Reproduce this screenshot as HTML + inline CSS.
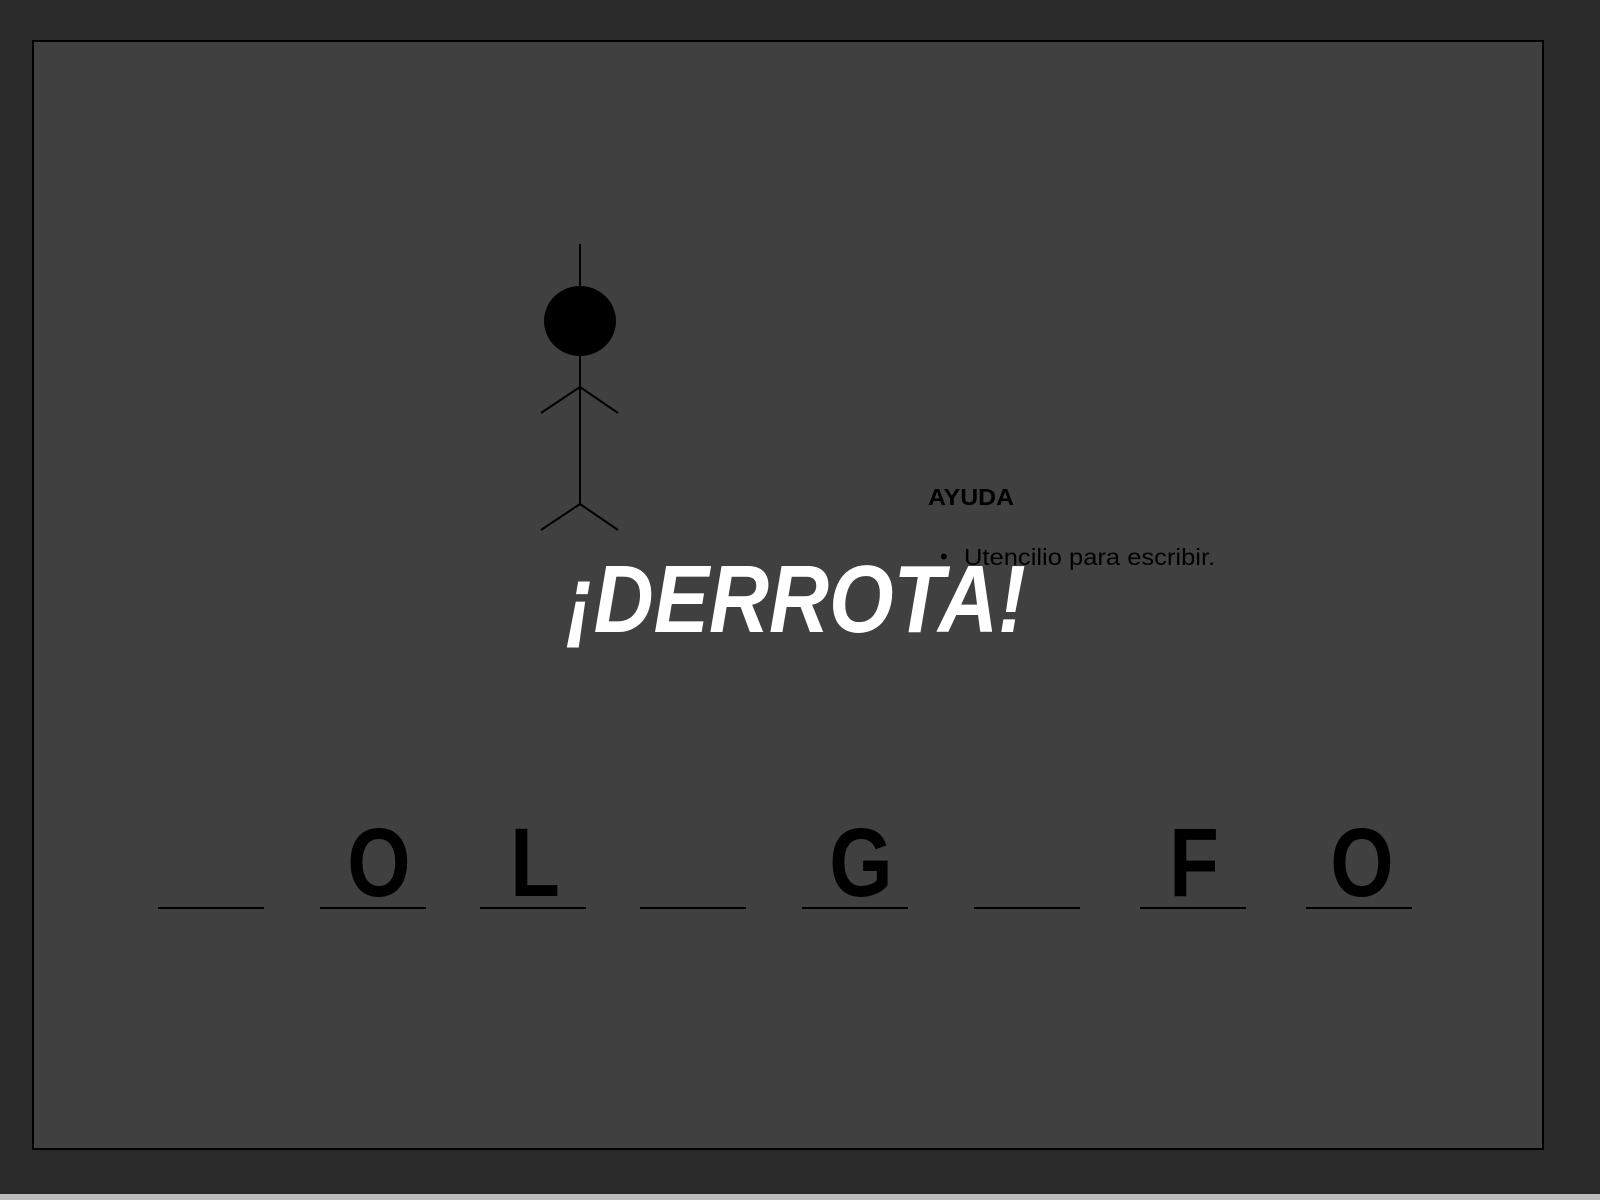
<!DOCTYPE html>
<html><head><meta charset="utf-8"><style>
html,body{margin:0;padding:0;width:1600px;height:1200px;overflow:hidden;background:#2a2a2a;font-family:"Liberation Sans",sans-serif}
.panel{position:absolute;left:32px;top:40px;width:1512px;height:1110px;background:#404040;border:2px solid #000;box-sizing:border-box}
.strip{position:absolute;left:0;top:1194px;width:1600px;height:6px;background:#bdbdbd}
.seg{position:absolute;top:907px;height:2px;width:106px;background:#000}
.let{position:absolute;top:808px;width:106px;text-align:center;font-weight:bold;font-size:97px;line-height:110px;color:#000;transform:scaleX(0.84)}
.t{position:absolute;color:#000}
</style></head><body>
<div class="panel"></div>
<svg style="position:absolute;left:0;top:0" width="1600" height="1200">
<g stroke="#000" stroke-width="2" fill="none">
<line x1="580" y1="244" x2="580" y2="505"/>
<line x1="580" y1="387" x2="541" y2="413"/>
<line x1="580" y1="387" x2="618" y2="413"/>
<line x1="580" y1="504" x2="541" y2="530"/>
<line x1="580" y1="504" x2="618" y2="530"/>
</g>
<ellipse cx="580" cy="321" rx="36" ry="35" fill="#000"/>
</svg>
<div class="t" style="left:928px;top:484px;font-weight:bold;font-size:23px;transform:scaleX(1.08);transform-origin:left">AYUDA</div>
<div class="t" style="left:940px;top:544px;font-size:22px">•</div>
<div class="t" style="left:964px;top:544px;font-size:23px;transform:scaleX(1.11);transform-origin:left">Utencilio para escribir.</div>
<div style="position:absolute;left:566px;top:545px;font-size:96px;font-weight:bold;font-style:italic;color:#fff;line-height:110px;transform:scaleX(0.865);transform-origin:left">¡DERROTA!</div>
<div class="seg" style="left:158px"></div>
<div class="seg" style="left:320px"></div><div class="let" style="left:326px">O</div>
<div class="seg" style="left:480px"></div><div class="let" style="left:482px">L</div>
<div class="seg" style="left:640px"></div>
<div class="seg" style="left:802px"></div><div class="let" style="left:808px">G</div>
<div class="seg" style="left:974px"></div>
<div class="seg" style="left:1140px"></div><div class="let" style="left:1141px">F</div>
<div class="seg" style="left:1306px"></div><div class="let" style="left:1309px">O</div>
<div class="strip"></div>
</body></html>
